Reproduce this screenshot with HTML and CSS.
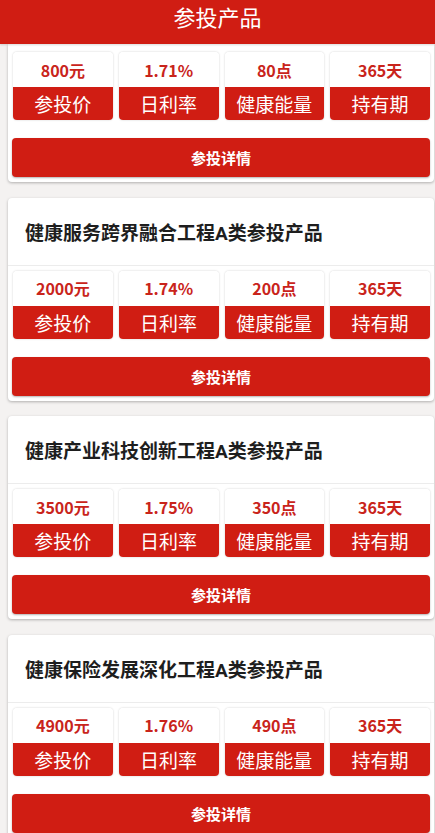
FILE: index.html
```html
<!DOCTYPE html>
<html lang="zh">
<head>
<meta charset="utf-8">
<title>参投产品</title>
<link rel="stylesheet" href="styles.css">
</head>
<body>
<header class="topbar">参投产品</header>
<main class="list">
  <section class="card card-partial">
    <div class="stats">
      <div class="stat"><div class="stat-value">800元</div><div class="stat-label">参投价</div></div>
      <div class="stat"><div class="stat-value">1.71%</div><div class="stat-label">日利率</div></div>
      <div class="stat"><div class="stat-value">80点</div><div class="stat-label">健康能量</div></div>
      <div class="stat"><div class="stat-value">365天</div><div class="stat-label">持有期</div></div>
    </div>
    <button class="detail-btn">参投详情</button>
  </section>
  <section class="card">
    <div class="card-title">健康服务跨界融合工程A类参投产品</div>
    <div class="stats">
      <div class="stat"><div class="stat-value">2000元</div><div class="stat-label">参投价</div></div>
      <div class="stat"><div class="stat-value">1.74%</div><div class="stat-label">日利率</div></div>
      <div class="stat"><div class="stat-value">200点</div><div class="stat-label">健康能量</div></div>
      <div class="stat"><div class="stat-value">365天</div><div class="stat-label">持有期</div></div>
    </div>
    <button class="detail-btn">参投详情</button>
  </section>
  <section class="card">
    <div class="card-title">健康产业科技创新工程A类参投产品</div>
    <div class="stats">
      <div class="stat"><div class="stat-value">3500元</div><div class="stat-label">参投价</div></div>
      <div class="stat"><div class="stat-value">1.75%</div><div class="stat-label">日利率</div></div>
      <div class="stat"><div class="stat-value">350点</div><div class="stat-label">健康能量</div></div>
      <div class="stat"><div class="stat-value">365天</div><div class="stat-label">持有期</div></div>
    </div>
    <button class="detail-btn">参投详情</button>
  </section>
  <section class="card">
    <div class="card-title">健康保险发展深化工程A类参投产品</div>
    <div class="stats">
      <div class="stat"><div class="stat-value">4900元</div><div class="stat-label">参投价</div></div>
      <div class="stat"><div class="stat-value">1.76%</div><div class="stat-label">日利率</div></div>
      <div class="stat"><div class="stat-value">490点</div><div class="stat-label">健康能量</div></div>
      <div class="stat"><div class="stat-value">365天</div><div class="stat-label">持有期</div></div>
    </div>
    <button class="detail-btn">参投详情</button>
  </section>
</main>
</body>
</html>
```

FILE: styles.css
```css
* { box-sizing: border-box; }
html, body {
  margin: 0;
  padding: 0;
  background: #f4f2f1;
  font-family: Roboto, "Noto Sans CJK SC", "Noto Sans", sans-serif;
  overflow: hidden;
}
.topbar {
  position: relative;
  z-index: 2;
  height: 44px;
  background: #d01d13;
  color: #fff;
  font-family: "Noto Sans CJK SC", sans-serif;
  font-size: 22px;
  line-height: 33px;
  text-align: center;
  box-shadow: 0 1px 2px rgba(0,0,0,0.15);
}
.list {
  display: flex;
  flex-direction: column;
  gap: 15.5px;
}
.card {
  margin-left: 8px;
  width: 426px;
  background: #fff;
  border-radius: 4px;
  box-shadow: 0 1px 3px rgba(0,0,0,0.28);
  padding: 0 4px 5px;
}
.card-partial {
  padding-top: 8px;
  border-top-left-radius: 0;
  border-top-right-radius: 0;
}
.card-title {
  height: 68px;
  display: flex;
  align-items: center;
  font-size: 19px;
  font-weight: bold;
  color: #1e1e1e;
  border-bottom: 1px solid #ececec;
  margin: 0 -4px;
  padding-left: 17px;
}
.stats {
  display: grid;
  grid-template-columns: repeat(4, 1fr);
  gap: 6px;
  padding-top: 5px;
  padding-left: 1px;
}
.card-partial .stats { padding-top: 0; }
.stat {
  border-radius: 4px;
  overflow: hidden;
  box-shadow: 0 0 2px rgba(0,0,0,0.22);
  display: flex;
  flex-direction: column;
}
.stat-value {
  height: 35px;
  display: flex;
  align-items: center;
  justify-content: center;
  color: #c9241b;
  font-family: "Noto Sans CJK SC", sans-serif;
  font-weight: bold;
  font-size: 16px;
  background: #fff;
}
.stat-label {
  height: 33px;
  display: flex;
  align-items: center;
  justify-content: center;
  background: #d01d13;
  color: #fff;
  font-family: "Noto Sans CJK SC", sans-serif;
  font-size: 19px;
}
.detail-btn {
  display: block;
  width: 100%;
  height: 39px;
  margin-top: 18px;
  border: none;
  border-radius: 4px;
  background: #d01d13;
  color: #fff;
  font-family: "Noto Sans CJK SC", sans-serif;
  font-size: 15px;
  font-weight: bold;
  box-shadow: 0 1px 2px rgba(0,0,0,0.3);
}
```
